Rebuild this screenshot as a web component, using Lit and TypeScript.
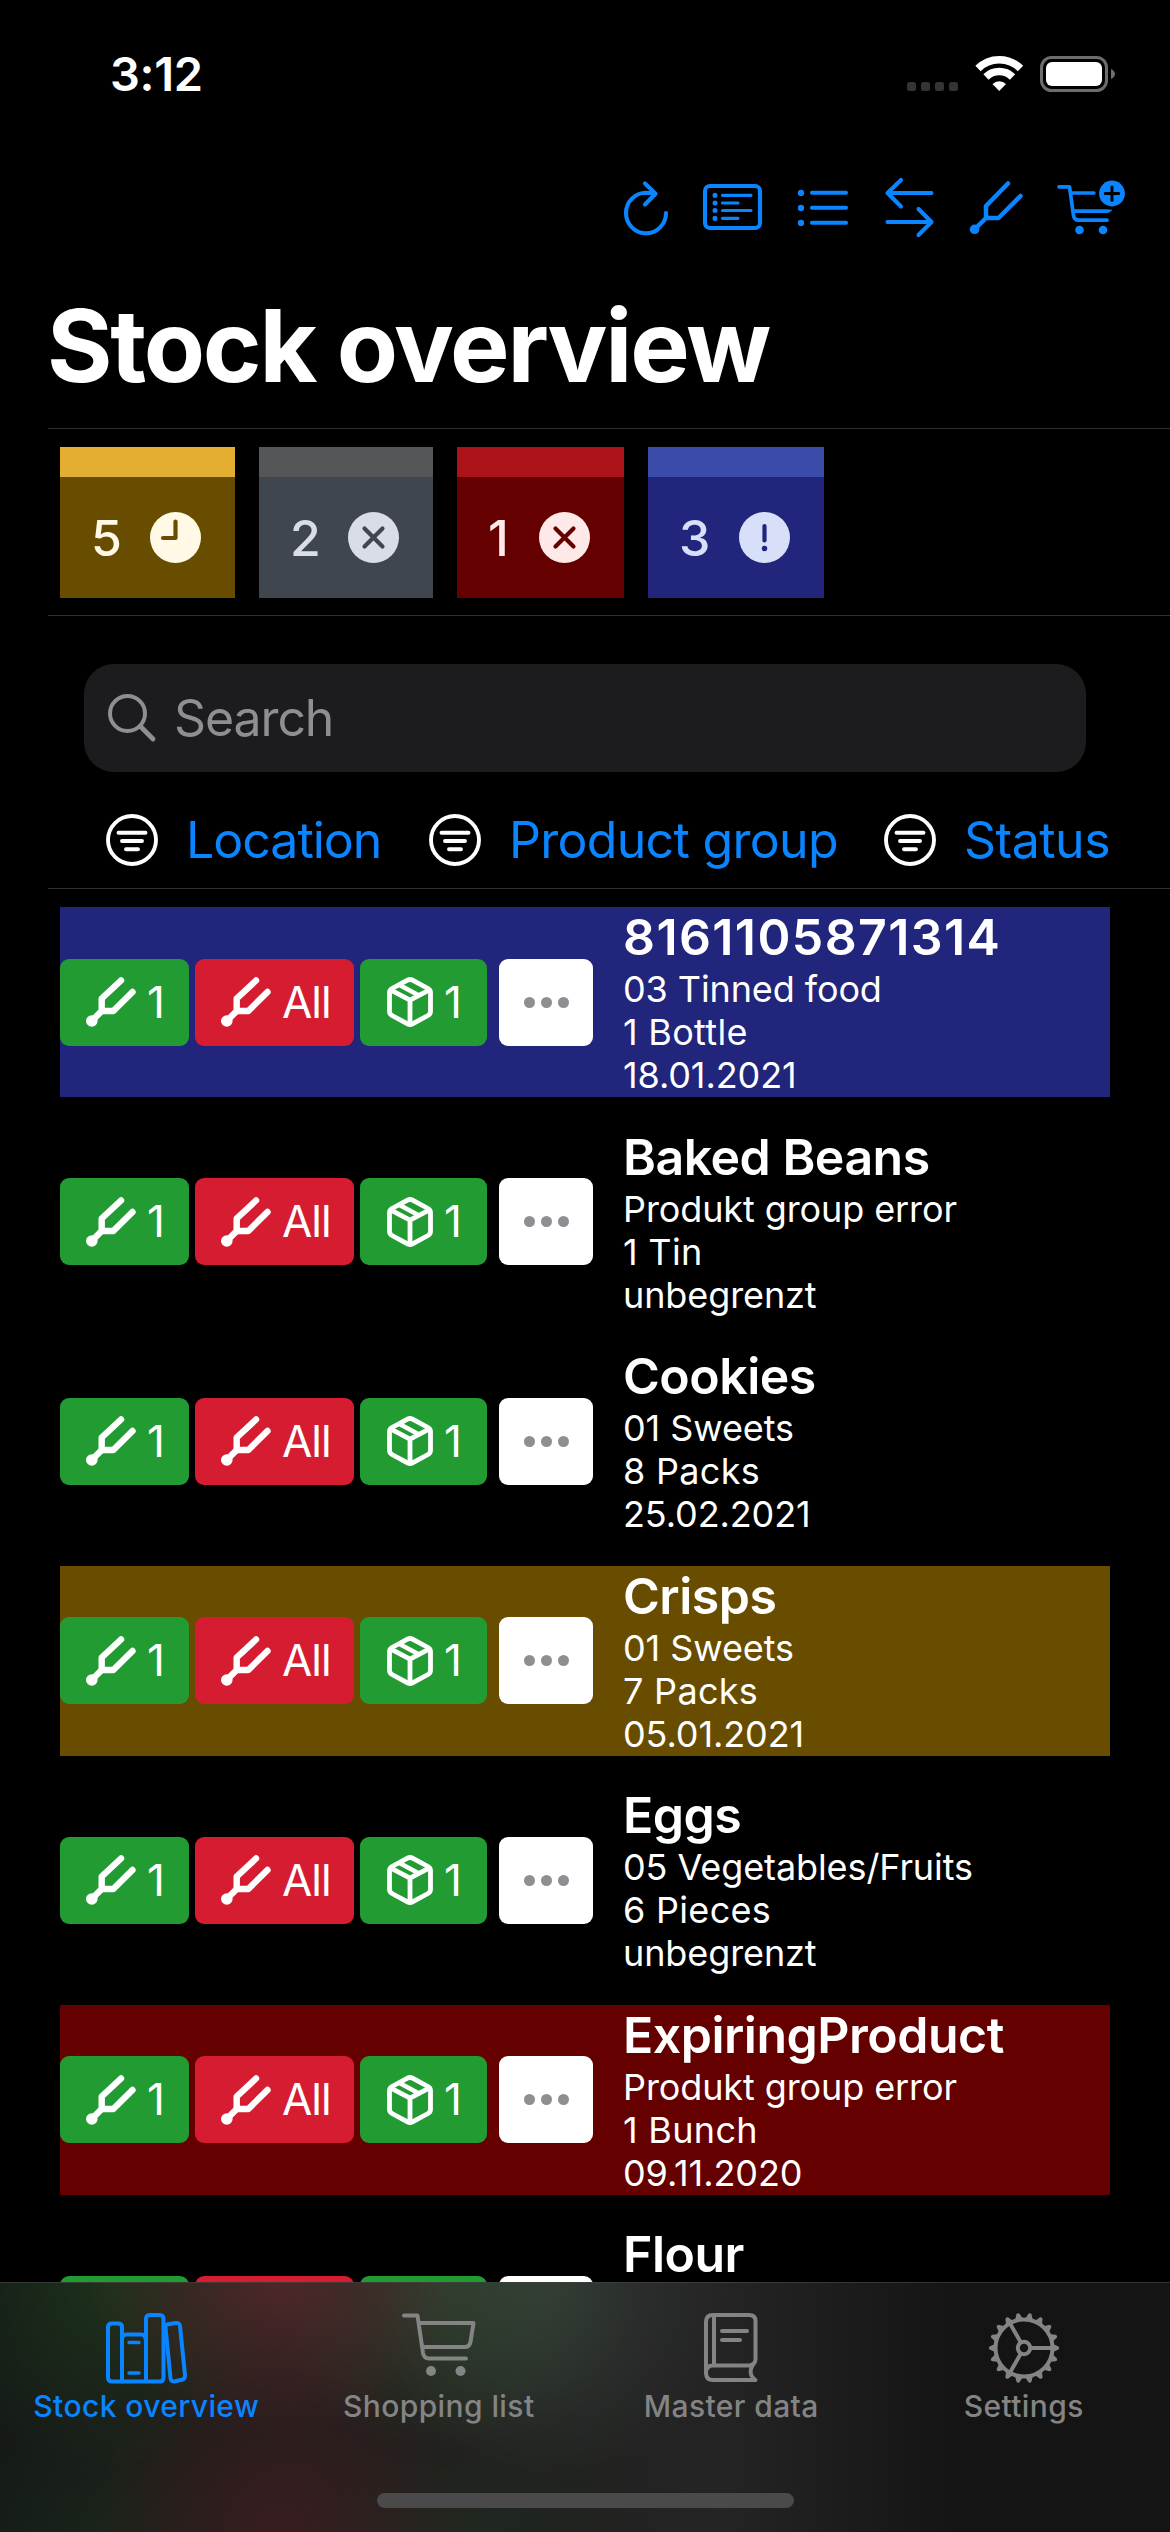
import { LitElement, html, css, svg } from "lit";
import { customElement, property } from "lit/decorators.js";
import { classMap } from "lit/directives/class-map.js";
import { styleMap } from "lit/directives/style-map.js";

interface Tile { count: number; kind: string; icon: string; }
interface Row { name: string; group: string; amount: string; due: string; tone: string; }

const tiles: Tile[] = [
  { count: 5, kind: "due", icon: "clock" },
  { count: 2, kind: "overdue", icon: "cross" },
  { count: 1, kind: "expired", icon: "cross" },
  { count: 3, kind: "missing", icon: "bang" },
];

const rows: Row[] = [
  { name: "8161105871314", group: "03 Tinned food", amount: "1 Bottle", due: "18.01.2021", tone: "missing" },
  { name: "Baked Beans", group: "Produkt group error", amount: "1 Tin", due: "unbegrenzt", tone: "plain" },
  { name: "Cookies", group: "01 Sweets", amount: "8 Packs", due: "25.02.2021", tone: "plain" },
  { name: "Crisps", group: "01 Sweets", amount: "7 Packs", due: "05.01.2021", tone: "due" },
  { name: "Eggs", group: "05 Vegetables/Fruits", amount: "6 Pieces", due: "unbegrenzt", tone: "plain" },
  { name: "ExpiringProduct", group: "Produkt group error", amount: "1 Bunch", due: "09.11.2020", tone: "expired" },
  { name: "Flour", group: "", amount: "", due: "", tone: "plain" },
];

const gearTeeth = Array.from({ length: 18 }, (_, i) => i * 20);

@customElement("stock-row")
class StockRow extends LitElement {
  @property({ attribute: false }) row!: Row;
  static styles = css`
    :host { display: block; height: 190px; }
    svg { display: block; flex: none; }
    .row { display: flex; align-items: center; height: 190px; color: #fff; }
    .missing { background: #21257b; }
    .due { background: #684d00; }
    .expired { background: #640000; }
    .btn { display: flex; align-items: center; height: 87px; border-radius: 9px; box-sizing: border-box; font-size: 44px; line-height: 87px; margin-right: 6px; padding-left: 26px; gap: 11px; flex: none; }
    .one { width: 129px; background: #219b32; }
    .all { width: 159px; background: #d51c31; }
    .open { width: 127px; background: #219b32; padding-left: 27px; }
    .more { width: 94px; background: #fff; margin: 0 0 0 6px; padding: 0; gap: 6px; justify-content: center; }
    .dot { width: 11px; height: 11px; border-radius: 50%; background: #8e8e93; }
    .all .label { letter-spacing: -1px; }
    .info { display: flex; flex-direction: column; margin-left: 30px; height: 190px; white-space: nowrap; }
    .name { font-size: 50px; font-weight: 600; line-height: 60px; height: 61px; letter-spacing: -0.5px; }
    .name.digits { letter-spacing: 1.4px; }
    .line { font-size: 36px; line-height: 43px; height: 43px; letter-spacing: -0.1px; }
    .line.qty { letter-spacing: 0.3px; }
  `;
  render() {
    const r = this.row;
    const fork = html`<svg width="50" height="50" viewBox="0 0 50 50">
      <g fill="none" stroke="#fff" stroke-width="6.400" stroke-linecap="round" stroke-linejoin="round">
        <path d="M5.700 44 L15.700 34 V21.500 L35 3.500"/><path d="M15.700 34 H27.300 L46.500 15"/>
      </g><circle cx="5.800" cy="44" r="5.800" fill="#fff"/></svg>`;
    return html`<div class="row ${r.tone}">
      <div class="btn one">${fork}<span class="label">1</span></div>
      <div class="btn all">${fork}<span class="label">All</span></div>
      <div class="btn open">
        <svg width="46" height="50" viewBox="0 0 46 50" fill="none" stroke="#fff" stroke-width="4.800" stroke-linejoin="round">
          <path d="M20.500 3.200 Q23 1.800 25.500 3.200 L41 11.500 Q43.500 13 43.500 15.500 V34.500 Q43.500 37 41 38.500 L25.500 46.800 Q23 48.200 20.500 46.800 L5 38.500 Q2.500 37 2.500 34.500 V15.500 Q2.500 13 5 11.500 Z"/>
          <path d="M4 13.200 L23 23.200 L42 13.200 M23 23.200 V47"/>
          <path d="M12.500 8 L33 19" stroke-width="4.400"/>
        </svg><span class="label">1</span></div>
      <div class="btn more"><i class="dot"></i><i class="dot"></i><i class="dot"></i></div>
      <div class="info">
        <div class=${classMap({ name: true, digits: /^\d+$/.test(r.name) })}>${r.name}</div>
        <div class="line">${r.group}</div>
        <div class="line qty">${r.amount}</div>
        <div class="line">${r.due}</div>
      </div>
    </div>`;
  }
}

@customElement("app-root")
class AppRoot extends LitElement {
  static styles = css`
    :host { display: block; width: 1170px; height: 2532px; overflow: hidden; position: relative; background: #000; color: #fff; font-family: Inter, "Liberation Sans", sans-serif; }
    svg { display: block; flex: none; }
    .status { display: flex; align-items: center; height: 148px; box-sizing: border-box; padding: 0 55px 0 110px; }
    .time { font-size: 47px; font-weight: 600; line-height: 60px; margin-right: auto; letter-spacing: -0.300px; }
    .tools { display: flex; height: 122px; box-sizing: border-box; padding: 28px 43px 0 622px; color: #0a84ff; }
    .title { margin: 0; height: 158px; padding-left: 47px; font-size: 100px; font-weight: 700; line-height: 152px; letter-spacing: -2.200px; white-space: nowrap; }
    .rule { height: 1px; background: #303032; margin-left: 48px; }
    .tiles { display: grid; grid-template-columns: 175px 174px 167px 176px; gap: 24px; padding: 18px 0 17px 60px; }
    .tile { display: flex; align-items: center; justify-content: space-between; height: 151px; box-sizing: border-box; border-top: 30px solid; padding: 0 34px 0 31px; font-size: 50px; font-weight: 500; }
    .tile.due { background: #684d00; border-color: #e3ae32; color: #fff9e6; }
    .tile.overdue { background: #3f464d; border-color: #555658; color: #dbdde6; }
    .tile.expired { background: #640000; border-color: #ab1219; color: #ffe8e8; }
    .tile.missing { background: #21257b; border-color: #3a4baa; color: #d8e0f9; }
    .search { display: flex; align-items: center; gap: 17px; margin: 48px 84px 0; height: 108px; box-sizing: border-box; padding-left: 24px; border-radius: 30px; background: #1c1c1e; color: #8e8e93; font-size: 50px; letter-spacing: -1.100px; }
    .filters { display: flex; align-items: center; height: 116px; box-sizing: border-box; padding: 20px 0 0 106px; white-space: nowrap; font-size: 50px; color: #0a84ff; }
    .filter { display: flex; align-items: center; gap: 28px; }
    .list { display: flex; flex-direction: column; gap: 29.500px; padding: 18px 60px 0; }
    .tabs { position: absolute; left: 0; right: 0; bottom: 0; height: 250px; box-sizing: border-box; display: grid; grid-template-columns: repeat(4, 1fr); grid-template-rows: 1fr 39px; border-top: 1px solid rgba(120, 122, 124, 0.300); color: #848484; font-size: 30px; font-weight: 500; letter-spacing: 0.400px;
      background:
        radial-gradient(ellipse 190px 150px at 275px 0, rgba(105, 42, 48, 0.620), transparent),
        radial-gradient(ellipse 180px 190px at 110px 0, rgba(30, 66, 28, 0.550), transparent),
        radial-gradient(ellipse 190px 170px at 450px 0, rgba(52, 82, 52, 0.520), transparent),
        radial-gradient(ellipse 180px 200px at 545px 0, rgba(75, 85, 82, 0.420), transparent),
        radial-gradient(ellipse 190px 190px at 275px 250px, rgba(72, 28, 34, 0.600), transparent),
        radial-gradient(ellipse 140px 120px at 100px 250px, rgba(24, 48, 28, 0.400), transparent),
        radial-gradient(ellipse 130px 90px at 460px 250px, rgba(30, 52, 34, 0.350), transparent),
        linear-gradient(90deg, #151a17 0, #221e1c 25%, #20221f 45%, #242424 62%, #131413 82%, #131413 100%); }
    .tab { display: flex; flex-direction: column; align-items: center; padding-top: 29px; gap: 4px; white-space: nowrap; }
    .tab .cap { line-height: 36px; }
    .active { color: #0a84ff; }
    .home { grid-column: 1 / -1; justify-self: center; width: 417px; height: 15px; border-radius: 8px; background: #4a4a4b; }
  `;

  private badge(kind: string) {
    const mark = kind === "clock" ? svg`<path d="M25.500 9.500 V26 H13"/>`
      : kind === "cross" ? svg`<path d="M16.500 16.500 L34.500 34.500 M34.500 16.500 L16.500 34.500"/>`
      : svg`<path d="M25.500 14 V28.500"/><path d="M25.500 36.500 V36.600" stroke-width="5.500"/>`;
    return html`<svg width="51" height="51" viewBox="0 0 51 51"><defs><mask id="m-${kind}"><rect width="51" height="51" fill="#fff"/><g fill="none" stroke="#000" stroke-width="4.200" stroke-linecap="round" stroke-linejoin="round">${mark}</g></mask></defs><circle cx="25.500" cy="25.500" r="25.500" fill="currentColor" mask="url(#m-${kind})"/></svg>`;
  }

  private filter(label: string, width: number, spacing: number) {
    return html`<div class="filter" style=${styleMap({ width: width + "px", letterSpacing: spacing + "px" })}>
      <svg width="52" height="52" viewBox="0 0 52 52" fill="none" stroke="#fff" stroke-width="3.900" stroke-linecap="round"><circle cx="26" cy="26" r="24"/><path d="M12.500 18.800 H39.500 M16 27 H36 M20 35.300 H32"/></svg>
      <span>${label}</span></div>`;
  }

  render() {
    return html`
      <div class="status">
        <div class="time">3:12</div>
        <svg width="210" height="40" viewBox="905 54 210 40">
          <g fill="#343436"><rect x="907" y="82" width="9" height="9" rx="2.500"/><rect x="921" y="82" width="9" height="9" rx="2.500"/><rect x="935" y="82" width="9" height="9" rx="2.500"/><rect x="949" y="82" width="9" height="9" rx="2.500"/></g>
          <g fill="none" stroke="#fff" stroke-width="7.500"><path d="M978 68.500 A30 30 0 0 1 1020.500 68.500"/><path d="M986 77 A19 19 0 0 1 1012.500 77"/></g>
          <path d="M999.200 91 L992.500 84 A9.500 9.500 0 0 1 1006 84 Z" fill="#fff"/>
          <rect x="1041.500" y="57.500" width="65" height="33" rx="10" fill="none" stroke="#6d6d6f" stroke-width="3"/>
          <rect x="1046" y="62" width="56" height="24" rx="6" fill="#fff"/>
          <path d="M1111 69 Q1115 71 1115 74 T1111 79 Z" fill="#6d6d6f"/>
        </svg>
      </div>
      <div class="tools">
        <svg width="505" height="62" viewBox="622 176 505 62" fill="none" stroke="currentColor" stroke-width="4.100" stroke-linecap="round" stroke-linejoin="round">
          <path d="M666 213 A20 20.300 0 1 1 646 192.700 L655 193.500 M645 183.500 L655.500 193.700 L645 204.500"/>
          <rect x="705" y="186" width="55" height="42" rx="5"/>
          <path d="M722.500 195.300 H751 M722.500 203 H738 M722.500 210.500 H751 M722.500 218.300 H738" stroke-width="3.200"/>
          <path d="M715 195.300 V195.400 M715 203 V203.100 M715 210.500 V210.600 M715 218.300 V218.400" stroke-width="5"/>
          <path d="M812 192.800 H846 M812 207.800 H846 M812 222.800 H846"/>
          <path d="M801 192.800 V192.900 M801 207.800 V207.900 M801 222.800 V222.900" stroke-width="6.300"/>
          <path d="M931.500 193 H887.500 M901 180 L887.500 193 L901 206.500 M887.500 222 H931.500 M918.500 209 L931.500 222 L918.500 235"/>
          <path d="M975 229 L986 218 V206 L1008 183.500 M986 218 H998.500 L1020.500 196" stroke-width="4.500"/>
          <circle cx="974.600" cy="229.300" r="4.800" fill="currentColor" stroke="none"/>
          <g stroke-width="3.700"><path d="M1059 186.800 H1069.500 L1073.500 215.500 Q1074.500 220.200 1078.500 220.200 H1107 M1071.500 193 H1094 M1073.500 211.200 H1107 Q1110 210.500 1110.500 209.500"/></g>
          <circle cx="1079.500" cy="230" r="4.300" fill="currentColor" stroke="none"/><circle cx="1103" cy="230" r="4.300" fill="currentColor" stroke="none"/>
          <circle cx="1112" cy="193.500" r="16.300" fill="#000" stroke="none"/><circle cx="1112" cy="193.500" r="12.900" fill="currentColor" stroke="none"/>
          <path d="M1112 187 V200.300 M1105.300 193.600 H1118.700" stroke="#000" stroke-width="3"/>
        </svg>
      </div>
      <h1 class="title">Stock overview</h1>
      <div class="rule"></div>
      <div class="tiles">${tiles.map(t => html`<div class="tile ${t.kind}"><span>${t.count}</span>${this.badge(t.icon)}</div>`)}</div>
      <div class="rule"></div>
      <div class="search">
        <svg width="49" height="49" viewBox="0 0 49 49" fill="none" stroke="currentColor" stroke-width="4" stroke-linecap="round"><circle cx="19.500" cy="19.500" r="17.500"/><path d="M32.500 32.500 L45 45" stroke-width="4.800"/></svg>
        <span>Search</span>
      </div>
      <div class="filters">${this.filter("Location", 323, -1)}${this.filter("Product group", 455, -0.7)}${this.filter("Status", 230, -0.5)}</div>
      <div class="rule"></div>
      <div class="list">${rows.map(r => html`<stock-row .row=${r}></stock-row>`)}</div>
      <nav class="tabs">
        <div class="tab active">
          <svg width="82" height="72" viewBox="105 2311 82 72" fill="none" stroke="currentColor" stroke-width="4" stroke-linejoin="round" stroke-linecap="round">
            <path d="M122 2380.500 H112 Q108 2380.500 108 2376.500 V2326 Q108 2322.500 112 2322.500 H118 Q122 2322.500 122 2326 Z"/>
            <path d="M122 2338 Q122 2333.500 126 2333.500 H141 Q145.500 2333.500 145.500 2338 M122 2380.500 H160 Q163.500 2380.500 163.500 2376.500 V2318 Q163.500 2314 159.500 2314 H150 Q146 2314 146 2318 V2380"/>
            <path d="M129 2341.500 H139 M129 2372 H139" stroke-width="3.400"/>
            <path d="M165.500 2326 Q165.300 2323.800 168 2323.300 L176 2322 Q179.500 2321.500 180 2325 L185 2374 Q185.200 2378 182 2378.700 L175 2380.300 Q171 2381 170.500 2377 Z"/>
          </svg><span class="cap">Stock overview</span></div>
        <div class="tab">
          <svg width="75" height="72" viewBox="400 2311 75 72" fill="none" stroke="currentColor" stroke-width="4" stroke-linejoin="round" stroke-linecap="round">
            <path d="M403 2314.500 H416.500 L422 2352 Q423 2357.500 428 2357.500 H465 M419 2322 H472.500 L469.500 2341 Q468.500 2346 464 2346 H422"/>
            <circle cx="430" cy="2370" r="5" fill="currentColor" stroke="none"/><circle cx="459.500" cy="2370" r="5" fill="currentColor" stroke="none"/>
          </svg><span class="cap">Shopping list</span></div>
        <div class="tab">
          <svg width="56" height="72" viewBox="703 2311 56 72" fill="none" stroke="currentColor" stroke-width="4" stroke-linejoin="round" stroke-linecap="round">
            <path d="M706 2373 V2321 Q706 2314 713 2314 H749 Q755.500 2314 755.500 2320 V2358 Q755.500 2363 750 2364.500 H713 Q706 2364.500 706 2372 Q706 2379 713 2379 H755.500 Q746 2372 755 2361 M714 2315 V2364"/>
            <path d="M722 2330 H747 M722 2339 H740"/>
          </svg><span class="cap">Master data</span></div>
        <div class="tab">
          <svg width="74" height="72" viewBox="-37 -36 74 72" fill="none" stroke="currentColor" stroke-width="4">
            <circle r="28.500"/><circle r="6.200"/><path d="M6.500 0 H28 M-3.200 -5.600 L-14 -24.500 M-3.200 5.600 L-14 24.500"/>
            ${gearTeeth.map(a => svg`<path transform="rotate(${a})" d="M29 -4 L34.500 -1.500 Q36 0 34.500 1.500 L29 4 Z" fill="currentColor" stroke="none"/>`)}
          </svg><span class="cap">Settings</span></div>
        <div class="home"></div>
      </nav>`;
  }
}
